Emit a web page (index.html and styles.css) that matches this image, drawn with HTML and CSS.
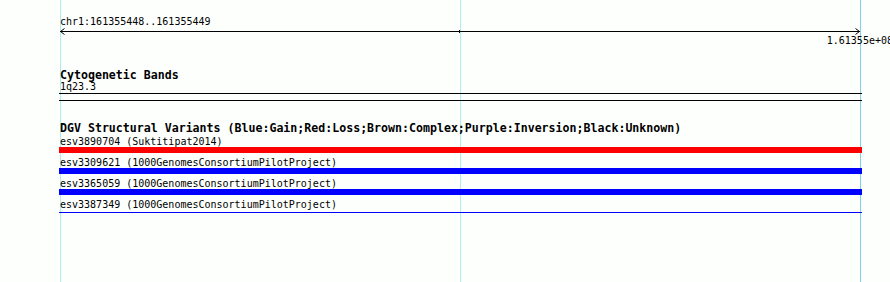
FILE: index.html
```html
<!DOCTYPE html>
<html lang="en">
  <head>
    <meta charset="UTF-8" />
    <title>DGV Structural Variants</title>
    <link rel="stylesheet" href="styles.css">
  </head>
  <body>
    <!-- grid lines sit behind the tracks -->
    <div class="grid-line grid-left"></div>
    <div class="grid-line grid-mid"></div>
    <div class="grid-line grid-right"></div>

    <div class="tracks">
      <div class="ruler">
        <div class="label">chr1:161355448..161355449</div>
        <svg class="axis" width="803" height="8" viewBox="0 0 803 8">
          <rect x="1" y="4" width="800" height="1" fill="#000" />
          <rect x="400" y="3" width="1" height="3" fill="#000" />
          <path d="M5.5 1.5 L1.5 4.5 L5.5 7.5" fill="none" stroke="#000" stroke-width="1" />
          <path d="M796.5 1.5 L800.5 4.5 L796.5 7.5" fill="none" stroke="#000" stroke-width="1" />
        </svg>
        <div class="label ruler-end">1.61355e+08</div>
      </div>

      <div class="track cyto">
        <div class="track-title">Cytogenetic Bands</div>
        <div class="label">1q23.3</div>
        <div class="cyto-line"></div>
      </div>

      <div class="track dgv">
        <div class="track-title">DGV Structural Variants (Blue:Gain;Red:Loss;Brown:Complex;Purple:Inversion;Black:Unknown)</div>
        <div class="feature">
          <div class="label">esv3890704 (Suktitipat2014)</div>
          <div class="bar loss"></div>
        </div>
        <div class="feature">
          <div class="label">esv3309621 (1000GenomesConsortiumPilotProject)</div>
          <div class="bar gain"></div>
        </div>
        <div class="feature">
          <div class="label">esv3365059 (1000GenomesConsortiumPilotProject)</div>
          <div class="bar gain"></div>
        </div>
        <div class="feature">
          <div class="label">esv3387349 (1000GenomesConsortiumPilotProject)</div>
          <div class="bar gain thin"></div>
        </div>
      </div>
    </div>
  </body>
</html>
```

FILE: styles.css
```css
/* Reset */
html,
body {
  margin: 0;
  padding: 0;
}
* {
  box-sizing: border-box;
}
body {
  position: relative;
  height: 282px;
  overflow: hidden;
  background: #fdfffd;
  color: #000;
  font-family: "DejaVu Sans Mono", monospace;
  font-size: 10px;
}
/* Vertical guide lines across the whole view */
.grid-line {
  position: absolute;
  top: 0;
  bottom: 0;
  width: 1px;
}
.grid-left {
  left: 60px;
  background: #b0eeee;
}
.grid-mid {
  left: 460px;
  background: #b0eeee;
}
.grid-right {
  left: 860px;
  background: #87ceeb;
}
/* Track column */
.tracks {
  position: relative;
  margin-left: 59px;
  width: 803px;
  padding-top: 16px;
}
.label {
  height: 11px;
  line-height: 11px;
  padding-left: 1px;
  white-space: nowrap;
}
.axis {
  display: block;
  overflow: visible;
}
.ruler-end {
  text-align: right;
  margin-right: -31px;
}
.track-title {
  height: 14px;
  line-height: 14px;
  padding-left: 1px;
  font-size: 11.6px;
  font-weight: bold;
  white-space: nowrap;
}
.cyto .track-title {
  margin-top: 22px;
  margin-bottom: -1px;
}
.cyto-line {
  margin-top: 1px;
  border-top: 1px solid #000;
}
.dgv {
  margin-top: 6px;
  border-top: 1px solid #000;
}
.dgv .track-title {
  margin-top: 20px;
  margin-bottom: -3px;
}
/* Feature rows: label above a coloured bar */
.feature {
  padding-top: 4px;
}
.bar {
  height: 6px;
}
.bar.loss {
  background: #f00;
}
.bar.gain {
  background: #00f;
}
.bar.thin {
  height: 1px;
  margin: 2px 0 3px;
}
```
